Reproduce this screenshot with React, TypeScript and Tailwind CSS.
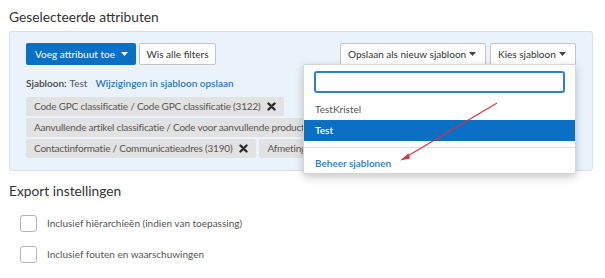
import React from "react";

const font = { fontFamily: 'Lato, "Open Sans", sans-serif' };

function Caret({ className = "" }: { className?: string }) {
  return (
    <svg width="7" height="4" viewBox="0 0 7 4" className={`shrink-0 ${className}`}>
      <path d="M0 0 L7 0 L3.5 4 Z" fill="currentColor" />
    </svg>
  );
}

function Cross() {
  return (
    <svg width="9" height="9" viewBox="0 0 9 9" className="ml-[7px] shrink-0">
      <path d="M1.5 1.5 L7.5 7.5 M7.5 1.5 L1.5 7.5" stroke="#2b2b2b" strokeWidth="2.4" strokeLinecap="round" />
    </svg>
  );
}

const tags = [
  "Code GPC classificatie / Code GPC classificatie (3122)",
  "Aanvullende artikel classificatie / Code voor aanvullende productclassificatie (3020)",
  "Contactinformatie / Communicatieadres (3190)",
  "Afmetingen / Hoogte (3100)",
];

function Tag({ label }: { label: string }) {
  return (
    <div className="flex h-[19px] items-center whitespace-nowrap rounded-[2px] bg-[#e2e2e2] px-[8px] text-[10px] tracking-[-0.2px] text-[#555]">
      {label}
      <Cross />
    </div>
  );
}

function Checkbox({ label }: { label: string }) {
  return (
    <div className="flex h-[31px] items-center">
      <div className="ml-[11px] h-[17px] w-[17px] rounded-[3px] border border-[#b5b5b5] bg-white" />
      <span className="ml-[10px] text-[10px] text-[#555]">{label}</span>
    </div>
  );
}

export default function App() {
  return (
    <div className="relative h-[278px] w-[605px] overflow-hidden bg-white px-[9px] pt-[9px]" style={font}>
      <h2 className="text-[13.75px] leading-[16px] text-[#333]">Geselecteerde attributen</h2>

      {/* Selected attributes panel */}
      <div className="mt-[6px] w-[584px] rounded-[3px] border border-[#d3e2ef] bg-[#eaf3fb] px-[16px] pb-[12px] pt-[11px]">
        <div className="flex items-center whitespace-nowrap">
          <button className="flex h-[22px] w-[110px] items-center justify-between rounded-[2px] bg-[#0b6fc4] pl-[9px] pr-[8px] text-[10px] text-white">
            Voeg attribuut toe
            <Caret />
          </button>
          <button className="ml-[3px] h-[22px] w-[77px] rounded-[2px] border border-[#c4c4c4] bg-white text-[10px] text-[#333]">
            Wis alle filters
          </button>

          <div className="ml-auto flex items-center gap-[4px]">
            <button className="flex h-[22px] w-[146px] items-center justify-between rounded-[2px] border border-[#c4c4c4] bg-white pl-[7px] pr-[9px] text-[10px] text-[#333]">
              Opslaan als nieuw sjabloon
              <Caret className="text-[#444]" />
            </button>
            <div className="relative">
              <button className="flex h-[22px] w-[86px] items-center justify-between rounded-[2px] border border-[#c4c4c4] bg-white pl-[7px] pr-[9px] text-[10px] text-[#333]">
                Kies sjabloon
                <Caret className="text-[#444]" />
              </button>

              {/* Template dropdown */}
              <div className="absolute right-0 top-[21px] z-10 w-[273px] rounded-[2px] border border-[#d6d6d6] bg-white pb-[5px] pt-[6px] shadow-[0_3px_8px_rgba(0,0,0,0.22)]">
                <div className="mx-[10px] h-[22px] rounded-[3px] border-2 border-[#2f7fc8] bg-white" />
                <div className="mt-[6px] flex h-[21px] items-center px-[11px] text-[10px] text-[#555]">TestKristel</div>
                <div className="flex h-[21px] items-center bg-[#0b6fc4] px-[11px] text-[10px] font-semibold text-white">Test</div>
                <div className="mt-[6px] border-t border-[#e0e0e0]" />
                <div className="flex h-[20px] items-center px-[11px] pt-[10px] text-[10px] font-semibold text-[#2b78c2]">
                  Beheer sjablonen
                </div>
              </div>
            </div>
          </div>
        </div>

        <div className="mt-[10px] flex h-[16px] items-center text-[10px]">
          <span className="font-semibold text-[#444]">Sjabloon:</span>
          <span className="ml-[3px] text-[#555]">Test</span>
          <a className="ml-[8px] font-semibold text-[#2b78c2]">Wijzigingen in sjabloon opslaan</a>
        </div>

        <div className="mt-[6px] flex w-[540px] flex-wrap gap-x-[3px] gap-y-[2px]">
          {tags.map((t) => (
            <Tag key={t} label={t} />
          ))}
        </div>
      </div>

      <h2 className="mt-[12px] text-[13.75px] leading-[16px] text-[#333]">Export instellingen</h2>
      <div className="mt-[9px]">
        <Checkbox label="Inclusief hiërarchieën (indien van toepassing)" />
        <Checkbox label="Inclusief fouten en waarschuwingen" />
      </div>

      {/* Annotation arrow */}
      <svg className="pointer-events-none absolute left-0 top-0 z-20" width="605" height="278">
        <line x1="497" y1="103" x2="406" y2="157" stroke="#d8343c" strokeWidth="1.2" />
        <path d="M400 160.5 L408.5 153.5 L410 158.5 Z" fill="#d8343c" />
      </svg>
    </div>
  );
}
